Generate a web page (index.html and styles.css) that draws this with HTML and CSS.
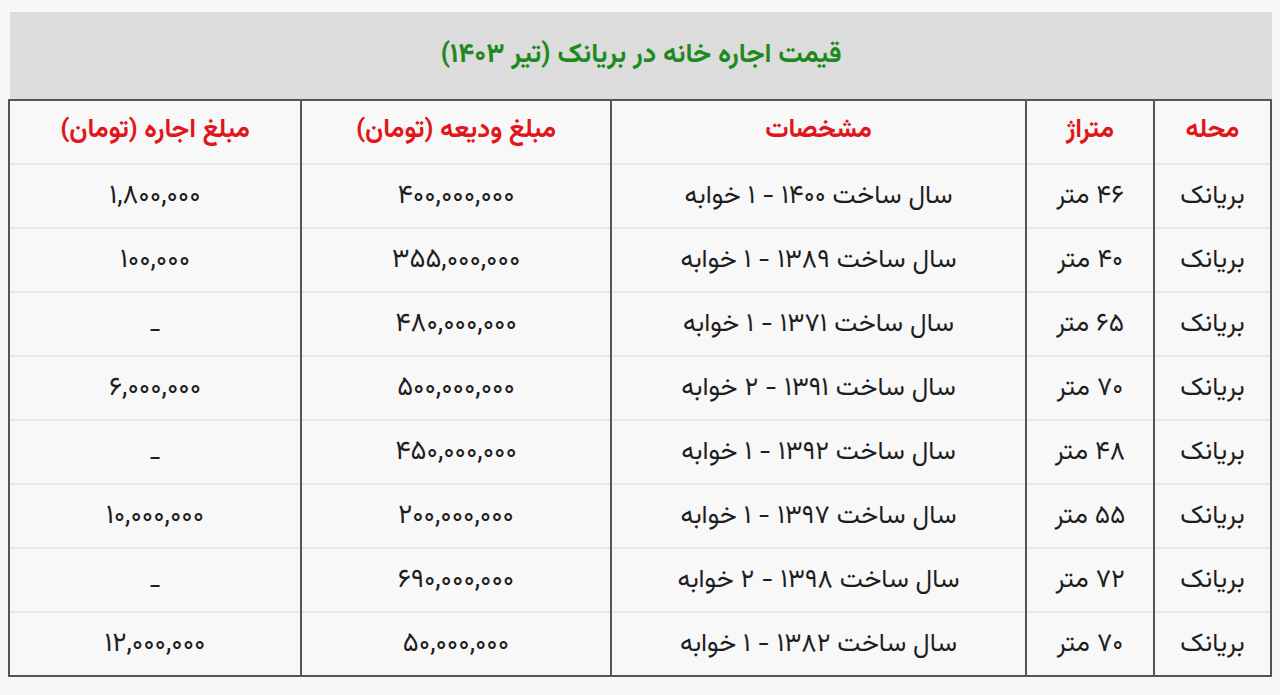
FILE: index.html
```html
<!DOCTYPE html>
<html lang="fa" dir="rtl">
<head>
<meta charset="utf-8">
<title>قیمت اجاره خانه در بریانک</title>
<link rel="stylesheet" href="styles.css">
</head>
<body>
<div class="page">
  <div class="caption">قیمت اجاره خانه در بریانک (تیر ۱۴۰۳)</div>
  <table class="grid">
    <colgroup>
      <col class="c-area"><col class="c-size"><col class="c-spec"><col class="c-dep"><col class="c-rent">
    </colgroup>
    <thead>
      <tr><th>محله</th><th>متراژ</th><th>مشخصات</th><th>مبلغ ودیعه (تومان)</th><th>مبلغ اجاره (تومان)</th></tr>
    </thead>
    <tbody>
      <tr><td>بریانک</td><td>۴۶ متر</td><td>سال ساخت ۱۴۰۰ - ۱ خوابه</td><td class="num">۴۰۰,۰۰۰,۰۰۰</td><td class="num">۱,۸۰۰,۰۰۰</td></tr>
      <tr><td>بریانک</td><td>۴۰ متر</td><td>سال ساخت ۱۳۸۹ - ۱ خوابه</td><td class="num">۳۵۵,۰۰۰,۰۰۰</td><td class="num">۱۰۰,۰۰۰</td></tr>
      <tr><td>بریانک</td><td>۶۵ متر</td><td>سال ساخت ۱۳۷۱ - ۱ خوابه</td><td class="num">۴۸۰,۰۰۰,۰۰۰</td><td class="num dash">-</td></tr>
      <tr><td>بریانک</td><td>۷۰ متر</td><td>سال ساخت ۱۳۹۱ - ۲ خوابه</td><td class="num">۵۰۰,۰۰۰,۰۰۰</td><td class="num">۶,۰۰۰,۰۰۰</td></tr>
      <tr><td>بریانک</td><td>۴۸ متر</td><td>سال ساخت ۱۳۹۲ - ۱ خوابه</td><td class="num">۴۵۰,۰۰۰,۰۰۰</td><td class="num dash">-</td></tr>
      <tr><td>بریانک</td><td>۵۵ متر</td><td>سال ساخت ۱۳۹۷ - ۱ خوابه</td><td class="num">۲۰۰,۰۰۰,۰۰۰</td><td class="num">۱۰,۰۰۰,۰۰۰</td></tr>
      <tr><td>بریانک</td><td>۷۲ متر</td><td>سال ساخت ۱۳۹۸ - ۲ خوابه</td><td class="num">۶۹۰,۰۰۰,۰۰۰</td><td class="num dash">-</td></tr>
      <tr><td>بریانک</td><td>۷۰ متر</td><td>سال ساخت ۱۳۸۲ - ۱ خوابه</td><td class="num">۵۰,۰۰۰,۰۰۰</td><td class="num">۱۲,۰۰۰,۰۰۰</td></tr>
    </tbody>
  </table>
</div>
</body>
</html>
```

FILE: styles.css
```css
html, body {
  margin: 0;
  padding: 0;
  background: #f7f7f7;
}
body {
  font-family: "Vazirmatn", "Vazir", "Noto Sans Arabic", "Noto Naskh Arabic", "DejaVu Sans", sans-serif;
  color: #1e1e1e;
}
.page {
  padding: 12px 8px 0 8px;
  width: 1262px;
  margin-left: auto;
}
.caption {
  height: 87px;
  background: #dcdcdc;
  color: #1e8a1e;
  font-weight: bold;
  font-size: 27px;
  display: flex;
  align-items: center;
  justify-content: center;
}
.grid {
  width: 1262px;
  border-collapse: collapse;
  table-layout: fixed;
  background: #f8f8f8;
  border: 2px solid #555;
}
.c-area { width: 117px; }
.c-size { width: 128px; }
.c-spec { width: 415px; }
.c-dep  { width: 310px; }
.c-rent { width: 292px; }
.grid th, .grid td {
  height: 62px;
  padding: 0;
  text-align: center;
  vertical-align: middle;
  border-left: 2px solid #555;
  border-right: 2px solid #555;
  border-top: 2px solid #e8e8e8;
  font-size: 26px;
}
.grid td.num {
  font-size: 27px;
}
.grid td.dash {
  padding-top: 12px;
  height: 50px;
}
.grid thead th {
  color: #e0161b;
  font-weight: bold;
  font-size: 26px;
  padding-bottom: 4px;
  height: 58px;
  border-top: 2px solid #555;
}
```
